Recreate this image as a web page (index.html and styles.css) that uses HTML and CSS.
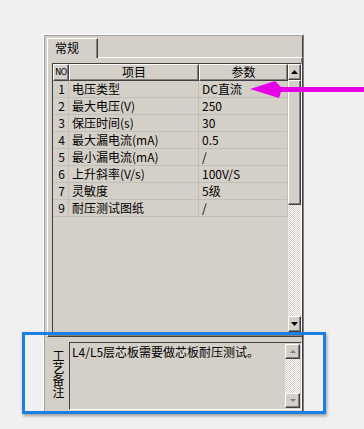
FILE: index.html
```html
<!DOCTYPE html>
<html lang="zh">
<head>
<meta charset="utf-8">
<link rel="stylesheet" href="styles.css">
</head>
<body>
<div class="page">
  <div class="panel">
    <div class="tabs"><div class="tab">常规</div></div>
    <div class="tabbody">
      <div class="grid">
        <div class="gridmain">
          <div class="row head">
            <div class="c no">NO</div><div class="c item">项目</div><div class="c val">参数</div>
          </div>
          <div class="row"><div class="c no">1</div><div class="c item">电压类型</div><div class="c val">DC直流</div></div>
          <div class="row"><div class="c no">2</div><div class="c item">最大电压(V)</div><div class="c val">250</div></div>
          <div class="row"><div class="c no">3</div><div class="c item">保压时间(s)</div><div class="c val">30</div></div>
          <div class="row"><div class="c no">4</div><div class="c item">最大漏电流(mA)</div><div class="c val">0.5</div></div>
          <div class="row"><div class="c no">5</div><div class="c item">最小漏电流(mA)</div><div class="c val">/</div></div>
          <div class="row"><div class="c no">6</div><div class="c item">上升斜率(V/s)</div><div class="c val">100V/S</div></div>
          <div class="row"><div class="c no">7</div><div class="c item">灵敏度</div><div class="c val">5级</div></div>
          <div class="row"><div class="c no">9</div><div class="c item">耐压测试图纸</div><div class="c val">/</div></div>
        </div>
        <div class="vscroll">
          <div class="sbtn up"><svg width="7" height="4" viewBox="0 0 7 4"><polygon points="3.5,0 7,4 0,4" fill="#000"/></svg></div>
          <div class="thumb"></div>
          <div class="track"></div>
          <div class="sbtn down"><svg width="7" height="4" viewBox="0 0 7 4"><polygon points="0,0 7,0 3.5,4" fill="#000"/></svg></div>
        </div>
      </div>
    </div>
    <div class="remark">
      <div class="rlabel">工艺备注</div>
      <div class="rbox">
        <div class="rtext">L4/L5层芯板需要做芯板耐压测试。</div>
        <div class="vscroll small">
          <div class="sbtn sup"><svg width="8" height="5" viewBox="0 0 8 5"><polygon points="4,1 7,4 1,4" fill="#808080"/></svg></div>
          <div class="track"></div>
          <div class="sbtn sdown"><svg width="8" height="5" viewBox="0 0 8 5"><polygon points="1,1 7,1 4,4" fill="#808080"/></svg></div>
        </div>
      </div>
    </div>
  </div>
  <div class="callout"></div>
  <svg class="arrow" width="116" height="22" viewBox="0 0 116 22">
    <polygon points="2,11 27,3 33,9 116,9 116,14 33,14 31,20" fill="#e600e6"/>
  </svg>
</div>
</body>
</html>
```

FILE: styles.css
```css
* { box-sizing: border-box; }
html, body { margin: 0; padding: 0; }
body {
  background: #f0f0f0;
  font-family: "Noto Sans CJK SC", "Noto Sans", sans-serif;
  font-size: 12px;
  color: #000;
}
.page {
  position: relative;
  width: 364px;
  height: 429px;
  padding: 34px 0 0 43px;
  overflow: hidden;
}
.panel {
  width: 261px;
  height: 377px;
  background: #d4d0c8;
  border-top: 1px solid #fff;
  border-left: 1px solid #fff;
  border-right: 1px solid #808080;
  box-shadow: inset 1px 1px 0 #a0a0a0, inset -1px 0 0 #404040;
  padding: 3px 1px 0 3px;
  display: flex;
  flex-direction: column;
}
.tabs {
  height: 19px;
  display: flex;
  position: relative;
  z-index: 1;
}
.tab {
  width: 51px;
  height: 20px;
  background: #d4d0c8;
  border-top: 1px solid #fff;
  border-left: 1px solid #fff;
  border-right: 1px solid #404040;
  box-shadow: inset -1px 0 0 #808080;
  padding-left: 7px;
  line-height: 17px;
  font-size: 12px;
}
.tabbody {
  width: 256px;
  height: 280px;
  border-top: 1px solid #fff;
  border-left: 1px solid #fff;
  border-right: 1px solid #404040;
  border-bottom: 1px solid #404040;
  box-shadow: inset -1px -1px 0 #808080;
  padding: 5px 0 0 4px;
}
.grid {
  width: 250px;
  height: 270px;
  border: 1px solid;
  border-color: #404040 #fff #fff #404040;
  display: flex;
  background: #d4d0c8;
}
.gridmain {
  width: 235px;
  display: flex;
  flex-direction: column;
}
.row {
  display: flex;
  height: 17px;
  line-height: 16px;
  border-bottom: 1px solid #c2beb6;
}
.c {
  border-right: 1px solid #c2beb6;
  white-space: nowrap;
  overflow: hidden;
}
.no { width: 16px; text-align: right; padding-right: 3px; }
.item { width: 130px; padding-left: 3px; }
.val { width: 89px; padding-left: 3px; }
.row.head { height: 17px; border-bottom: 0; }
.row.head .c {
  text-align: center;
  padding: 0;
  border: 1px solid;
  border-color: #fff #404040 #404040 #fff;
  box-shadow: inset -1px -1px 0 #808080;
  line-height: 14px;
}
.row.head .no {
  font-family: "DejaVu Sans Condensed", "Liberation Sans Narrow", sans-serif;
  font-size: 9px;
  letter-spacing: -0.5px;
  overflow: visible;
}
.vscroll {
  width: 13px;
  display: flex;
  flex-direction: column;
}
.sbtn {
  background: #d4d0c8;
  border: 1px solid;
  border-color: #fff #404040 #404040 #fff;
  box-shadow: inset -1px -1px 0 #808080;
  display: flex;
  align-items: center;
  justify-content: center;
}
.up { height: 16px; }
.down { height: 16px; }
.thumb {
  height: 125px;
  background: #d4d0c8;
  border: 1px solid;
  border-color: #fff #404040 #404040 #fff;
  box-shadow: inset -1px -1px 0 #808080;
}
.track {
  flex: 1;
  background: repeating-conic-gradient(#ffffff 0 25%, #d4d0c8 0 50%) 0 0 / 2px 2px;
}
.remark {
  display: flex;
  height: 73px;
}
.rlabel {
  width: 22px;
  writing-mode: vertical-rl;
  font-size: 12px;
  line-height: 22px;
  padding-top: 13px;
}
.rbox {
  margin-top: 5px;
  width: 233px;
  height: 68px;
  border: 1px solid;
  border-color: #404040 #fff #fff #404040;
  display: flex;
}
.rtext {
  flex: 1;
  padding: 1px 2px;
  line-height: 15px;
  white-space: nowrap;
}
.vscroll.small {
  width: 15px;
  margin: 1px 1px 1px 0;
}
.sup, .sdown { height: 15px; }
.callout {
  position: absolute;
  left: 22px;
  top: 332px;
  width: 304px;
  height: 82px;
  border: 3px solid #1b7fe3;
  box-shadow: 1px 2px 3px rgba(0,0,0,0.35);
}
.arrow {
  position: absolute;
  left: 248px;
  top: 78px;
}
```
